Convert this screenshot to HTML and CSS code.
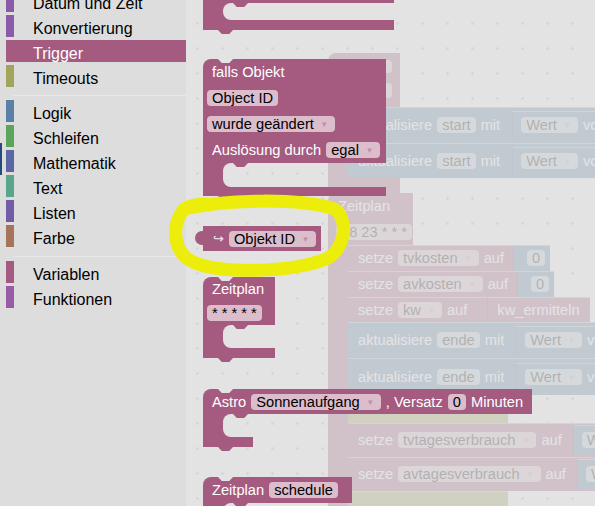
FILE: index.html
```html
<!DOCTYPE html>
<html lang="de">
<head>
<meta charset="utf-8">
<title>Blockly Trigger</title>
<link rel="stylesheet" href="styles.css">
</head>
<body>
<div class="app">
  <nav class="toolbox">
    <div class="tb-list">
      <div class="tb-row"><span class="mark c-date"></span>Datum und Zeit</div>
      <div class="tb-row"><span class="mark c-conv"></span>Konvertierung</div>
      <div class="tb-row sel"><span class="mark c-trig"></span>Trigger</div>
      <div class="tb-row"><span class="mark c-time"></span>Timeouts</div>
      <div class="tb-sep"></div>
      <div class="tb-row"><span class="mark c-logic"></span>Logik</div>
      <div class="tb-row"><span class="mark c-loop"></span>Schleifen</div>
      <div class="tb-row"><span class="mark c-math"></span>Mathematik</div>
      <div class="tb-row"><span class="mark c-text"></span>Text</div>
      <div class="tb-row"><span class="mark c-list"></span>Listen</div>
      <div class="tb-row"><span class="mark c-color"></span>Farbe</div>
      <div class="tb-sep sep2"></div>
      <div class="tb-row"><span class="mark c-var"></span>Variablen</div>
      <div class="tb-row"><span class="mark c-func"></span>Funktionen</div>
    </div>
  </nav>

  <main class="canvas">
    <div class="workspace">
      <div class="wstack stack-a">
        <div class="wtop-a pink">
          <span class="fld stub s1"></span>
          <span class="fld stub s2"></span>
        </div>
        <div class="wmouth">
          <div class="warm pink"></div>
          <div class="wlist">
            <div class="wrow blue h36"><span class="lbl">aktualisiere</span><span class="fld">start</span><span class="lbl">mit</span><span class="vin blue"><span class="fld">Wert<span class="arr">▾</span></span><span class="lbl">von</span><span class="fld">Objekt ID</span></span></div>
            <div class="wrow blue h35"><span class="lbl">aktualisiere</span><span class="fld">start</span><span class="lbl">mit</span><span class="vin blue"><span class="fld">Wert<span class="arr">▾</span></span><span class="lbl">von</span><span class="fld">Objekt ID</span></span></div>
          </div>
        </div>
        <div class="wbot-a pink"></div>
      </div>

      <div class="wstack stack-b">
        <div class="wtop-b pink">
          <div class="wr1"><span class="lbl">Zeitplan</span></div>
          <div class="wr2"><span class="fld">58 23 * * *</span></div>
        </div>
        <div class="wmouth">
          <div class="warm pink"></div>
          <div class="wlist">
            <div class="wrow pink h26"><span class="lbl">setze</span><span class="fld">tvkosten<span class="arr">▾</span></span><span class="lbl">auf</span><span class="vin blue num"><span class="fld">0</span></span></div>
            <div class="wrow pink h26"><span class="lbl">setze</span><span class="fld">avkosten<span class="arr">▾</span></span><span class="lbl">auf</span><span class="vin blue num"><span class="fld">0</span></span></div>
            <div class="wrow pink h25"><span class="lbl">setze</span><span class="fld">kw<span class="arr">▾</span></span><span class="lbl">auf</span><span class="vin pink call"><span class="lbl">kw_ermitteln</span></span></div>
            <div class="wrow blue h36"><span class="lbl">aktualisiere</span><span class="fld">ende</span><span class="lbl">mit</span><span class="vin blue"><span class="fld">Wert<span class="arr">▾</span></span><span class="lbl">von</span><span class="fld">Objekt ID</span></span></div>
            <div class="wrow blue h37"><span class="lbl">aktualisiere</span><span class="fld">ende</span><span class="lbl">mit</span><span class="vin blue"><span class="fld">Wert<span class="arr">▾</span></span><span class="lbl">von</span><span class="fld">Objekt ID</span></span></div>
            <div class="wrow olive o1"></div>
            <div class="wrow pink h34"><span class="lbl">setze</span><span class="fld">tvtagesverbrauch<span class="arr">▾</span></span><span class="lbl">auf</span><span class="vin blue wide"><span class="fld">Wert<span class="arr">▾</span></span><span class="lbl">von</span></span></div>
            <div class="wrow pink h34"><span class="lbl">setze</span><span class="fld">avtagesverbrauch<span class="arr">▾</span></span><span class="lbl">auf</span><span class="vin blue wide"><span class="fld">Wert<span class="arr">▾</span></span><span class="lbl">von</span></span></div>
            <div class="wrow olive o2"></div>
          </div>
        </div>
      </div>
    </div>

    <div class="flyout">
      <div class="blk b-cut next">
        <div class="top"></div>
        <div class="mouth"><div class="arm"></div><div class="hole"></div></div>
        <div class="foot"></div>
      </div>

      <div class="blk b-falls prev next">
        <div class="top">
          <div class="row"><span class="lbl">falls Objekt</span></div>
          <div class="row"><span class="fld">Object ID</span></div>
          <div class="row"><span class="fld">wurde geändert<span class="arr">▾</span></span></div>
          <div class="row"><span class="lbl">Auslösung durch</span><span class="fld">egal<span class="arr">▾</span></span></div>
        </div>
        <div class="mouth"><div class="arm"></div><div class="hole"></div></div>
        <div class="foot"></div>
      </div>

      <div class="vblk b-val">
        <span class="lbl hook">↪</span><span class="fld">Objekt ID<span class="arr">▾</span></span>
      </div>

      <div class="blk b-zeit prev next">
        <div class="top">
          <div class="row r1"><span class="lbl">Zeitplan</span></div>
          <div class="row r2"><span class="fld">* * * * *</span></div>
        </div>
        <div class="mouth"><div class="arm"></div><div class="hole"></div></div>
        <div class="foot"></div>
      </div>

      <div class="blk b-astro prev next">
        <div class="top">
          <div class="row"><span class="lbl">Astro</span><span class="fld">Sonnenaufgang<span class="arr">▾</span></span><span class="lbl">, Versatz</span><span class="fld">0</span><span class="lbl">Minuten</span></div>
        </div>
        <div class="mouth"><div class="arm"></div><div class="hole"></div></div>
        <div class="foot"></div>
      </div>

      <div class="blk b-sched prev">
        <div class="top">
          <div class="row"><span class="lbl">Zeitplan</span><span class="fld">schedule</span></div>
        </div>
        <div class="mouth"><div class="arm"></div><div class="hole"></div></div>
        <div class="foot"></div>
      </div>
    </div>
  </main>

  <svg class="ring" width="595" height="506" viewBox="0 0 595 506" aria-hidden="true">
    <path d="M184 209 C228 199 300 198 334 209 C349 217 346 250 326 259 C290 273 220 274 193 262 C174 253 170 227 184 209 C190 205 197 204 206 204" fill="none" stroke="#eded0c" stroke-width="13" stroke-linecap="round" stroke-linejoin="round"/>
  </svg>
</div>
</body>
</html>
```

FILE: styles.css
```css
* { box-sizing: border-box; }

html, body {
  margin: 0;
  padding: 0;
}

body {
  width: 595px;
  height: 506px;
  overflow: hidden;
  background: #e4e4e4;
  font-family: "Liberation Sans", Arial, sans-serif;
}

.app {
  position: relative;
  display: flex;
  width: 595px;
  height: 506px;
  overflow: hidden;
}

/* ---------- Toolbox ---------- */
.toolbox {
  position: relative;
  flex: 0 0 186px;
  background: #dddddd;
  overflow: hidden;
  font-size: 16px;
  color: #000;
}

.toolbox::before {
  content: "";
  position: absolute;
  left: 0;
  top: 143px;
  width: 2px;
  height: 32px;
  background: #244b7c;
}

.tb-list {
  margin-top: -10px;
}

.tb-row {
  display: flex;
  align-items: center;
  height: 22px;
  padding-top: 6px;
  line-height: 16px;
  margin: 0 0 3px 6px;
  white-space: nowrap;
}

.tb-row.sel {
  background: #a55b80;
  color: #fff;
}

.mark {
  flex: 0 0 8px;
  align-self: stretch;
  margin: -6px 19px 0 0;
}

.tb-sep {
  height: 6px;
  margin: 0 0 4px 13px;
  border-bottom: 1px solid #e8e8e8;
}

.tb-sep.sep2 {
  height: 7px;
}

.c-date, .c-conv { background: #895ba9; }
.c-trig { background: #a55b80; }
.c-time { background: #a0a55b; }
.c-logic { background: #5b80a5; }
.c-loop { background: #5ba55b; }
.c-math { background: #5b67a5; }
.c-text { background: #5ba58c; }
.c-list { background: #745ba5; }
.c-color { background: #a5745b; }
.c-var { background: #a55b80; }
.c-func { background: #995ba5; }

/* ---------- Canvas ---------- */
.canvas {
  position: relative;
  flex: 1;
  background: #dddddd;
  overflow: hidden;
}

.workspace {
  position: absolute;
  inset: 0;
  background-color: #ffffff;
  background-image: radial-gradient(circle, #bdbdbd 1px, transparent 1.6px);
  background-size: 25px 25px;
  background-position: -1px 11px;
  opacity: 0.2;
}

/* shared text pieces */
.lbl {
  padding: 0 5px;
  white-space: nowrap;
}

.fld {
  display: flex;
  align-items: center;
  height: 16px;
  padding: 0 5px;
  border-radius: 4px;
  background: rgba(255, 255, 255, 0.6);
  color: #000;
  white-space: nowrap;
}

.arr {
  display: inline-block;
  width: 11px;
  margin-left: 5px;
  font-family: "DejaVu Sans", sans-serif;
  font-size: 9px;
  color: #c08fa6;
  text-align: center;
}

.pink { background: #a55b80; }
.blue { background: #5b80a5; }
.olive { background: #a5a55b; }

/* ---------- Workspace blocks (behind the flyout) ---------- */
.wstack {
  position: absolute;
  width: max-content;
  display: flex;
  flex-direction: column;
  align-items: flex-start;
  font-size: 14.67px;
  line-height: 16px;
  color: #fff;
}

.wstack > *,
.wlist > * {
  flex-shrink: 0;
}

.stack-a { left: 142px; top: 53px; }
.stack-b { left: 142px; top: 193px; }

.wtop-a {
  width: 72px;
  height: 54px;
  display: flex;
  flex-direction: column;
  align-items: flex-end;
  gap: 10px;
  padding: 7px 8px 0 0;
  border-radius: 8px 0 0 0;
}

.stub { width: 40px; }
.stub.s1 { height: 13px; }
.stub.s2 { height: 15px; }

.wmouth {
  display: flex;
  align-items: stretch;
}

.warm {
  width: 20px;
  flex: 0 0 20px;
}

.wlist {
  display: flex;
  flex-direction: column;
  align-items: flex-start;
}

.wrow {
  display: flex;
  align-items: center;
  padding: 0 0 0 5px;
  white-space: nowrap;
  box-shadow: inset 0 1px 0 rgba(255, 255, 255, 0.45);
}

.h25 { height: 25px; }
.h26 { height: 26px; }
.h34 { height: 34px; }
.h35 { height: 35px; }
.h36 { height: 36px; }
.h37 { height: 37px; }

.o1 { width: 160px; height: 28px; }
.o2 { width: 160px; height: 30px; }

.vin {
  display: flex;
  align-items: center;
  height: 28px;
  margin-left: 7px;
  padding: 0 5px 0 9px;
  box-shadow: inset 1px 0 0 rgba(0, 0, 0, 0.18), inset 0 1px 0 rgba(255, 255, 255, 0.45);
}

.vin.num {
  align-self: stretch;
  height: auto;
  margin-left: 4px;
  padding-left: 14px;
}

.vin.call {
  align-self: stretch;
  height: auto;
  margin-left: 15px;
  padding: 0 5px;
}

.vin.wide {
  margin-left: 6px;
  height: 30px;
}

.wbot-a {
  width: 72px;
  height: 15px;
}

.wtop-b {
  width: 85px;
  display: flex;
  flex-direction: column;
  padding-left: 5px;
  border-radius: 8px 0 0 0;
}

.wr1 {
  height: 25px;
  display: flex;
  align-items: center;
}

.wr2 {
  height: 27px;
  display: flex;
  align-items: center;
  padding-left: 3px;
}

/* ---------- Flyout blocks ---------- */
.flyout {
  position: absolute;
  inset: 0;
  display: flex;
  flex-direction: column;
  align-items: flex-start;
  padding-left: 17px;
  font-size: 14.67px;
  line-height: 16px;
  color: #fff;
}

.flyout > *,
.blk > *,
.blk .top > * {
  flex-shrink: 0;
}

.blk {
  position: relative;
  display: flex;
  flex-direction: column;
  align-items: stretch;
}

.blk .top {
  display: flex;
  flex-direction: column;
  padding: 0 4px;
  background: #a55b80;
  border-radius: 8px 0 0 0;
}

.blk .row {
  display: flex;
  align-items: center;
  white-space: nowrap;
}

.mouth {
  display: flex;
}

.arm {
  flex: 0 0 20px;
  background: #a55b80;
}

.hole {
  position: relative;
  flex: 1;
  overflow: hidden;
}

.hole::before {
  content: "";
  position: absolute;
  inset: 0;
  border-radius: 8px 0 0 8px;
  box-shadow: 0 0 0 12px #a55b80;
}

.hole::after {
  content: "";
  position: absolute;
  left: 10px;
  top: 0;
  width: 15px;
  height: 4px;
  background: #a55b80;
  clip-path: polygon(0 0, 100% 0, 75% 100%, 25% 100%);
}

.foot {
  background: #a55b80;
}

.blk.next::after {
  content: "";
  position: absolute;
  left: 15px;
  bottom: -4px;
  width: 15px;
  height: 4px;
  background: #a55b80;
  clip-path: polygon(0 0, 100% 0, 75% 100%, 25% 100%);
}

.blk.prev::before {
  content: "";
  position: absolute;
  left: 15px;
  top: 0;
  width: 15px;
  height: 4px;
  background: #e4e4e4;
  clip-path: polygon(0 0, 100% 0, 75% 100%, 25% 100%);
  z-index: 1;
}

/* partially scrolled block at top */
.b-cut {
  width: 191px;
  margin-top: -27px;
}
.b-cut .top { height: 30px; }
.b-cut .mouth { height: 17px; }
.b-cut .foot { height: 10px; }

/* falls Objekt */
.b-falls {
  width: 183px;
  margin-top: 29px;
}
.b-falls .row { height: 26px; }
.b-falls .mouth { height: 24px; }
.b-falls .foot { height: 9px; }

/* Objekt ID value block */
.vblk {
  position: relative;
  display: flex;
  align-items: center;
  height: 25px;
  margin-top: 30px;
  padding: 0 5px;
  background: #a55b80;
  white-space: nowrap;
}

.vblk::before {
  content: "";
  position: absolute;
  left: -8px;
  top: 5px;
  width: 9px;
  height: 14px;
  background: #a55b80;
  border-radius: 7px 0 0 7px;
}

.hook {
  font-family: "DejaVu Sans", sans-serif;
  font-size: 13px;
  color: #f3e4ec;
}

/* Zeitplan */
.b-zeit {
  width: 72px;
  margin-top: 26px;
}
.b-zeit .r1 { height: 23px; }
.b-zeit .r2 { height: 25px; }
.b-zeit .mouth { height: 23px; }
.b-zeit .foot { height: 10px; }

/* Astro */
.b-astro {
  align-items: flex-start;
  margin-top: 31px;
}
.b-astro .row { height: 25px; }
.b-astro .mouth { width: 50px; height: 23px; }
.b-astro .foot { width: 50px; height: 10px; }

/* Zeitplan schedule */
.b-sched {
  width: 149px;
  margin-top: 30px;
}
.b-sched .row { height: 26px; }
.b-sched .mouth { height: 24px; }
.b-sched .foot { height: 10px; }

/* hand-drawn highlight */
.ring {
  position: absolute;
  left: 0;
  top: 0;
  pointer-events: none;
}
```
